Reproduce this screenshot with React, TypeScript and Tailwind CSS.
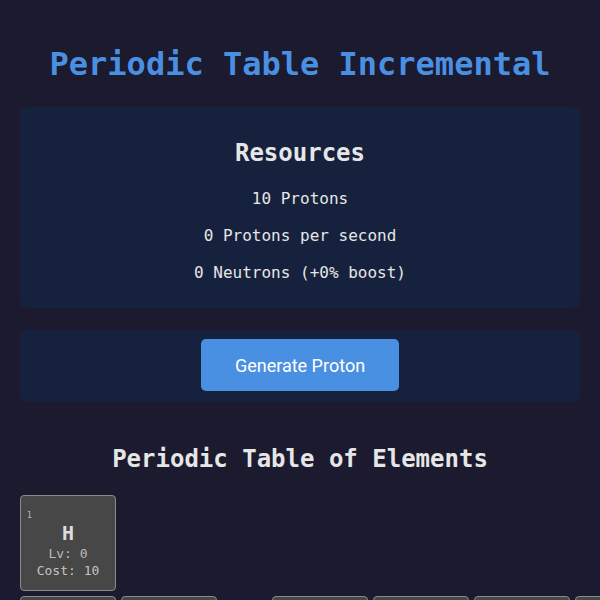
import React from "react";

type El = { n: number; sym: string; col: number; row: number };

const ELEMENTS: El[] = [
  { n: 1, sym: "H", col: 1, row: 1 },
  { n: 2, sym: "He", col: 18, row: 1 },
  { n: 3, sym: "Li", col: 1, row: 2 },
  { n: 4, sym: "Be", col: 2, row: 2 },
  { n: 5, sym: "B", col: 13, row: 2 },
  { n: 6, sym: "C", col: 14, row: 2 },
  { n: 7, sym: "N", col: 15, row: 2 },
  { n: 8, sym: "O", col: 16, row: 2 },
  { n: 9, sym: "F", col: 17, row: 2 },
  { n: 10, sym: "Ne", col: 18, row: 2 },
];

const mono = "font-['DejaVu_Sans_Mono','Liberation_Mono',monospace]";

function Cell({ el }: { el: El }) {
  return (
    <div
      className="relative w-[96px] h-[96px] rounded-[4px] border border-[#8a8a8a] bg-[#474747] flex flex-col items-center justify-center pt-[13px]"
      style={{ gridColumn: el.col, gridRow: el.row }}
    >
      <span className="absolute left-[6px] top-[15px] text-[8px] leading-[10px] text-[#bdbdbd]">{el.n}</span>
      <span className="text-[20px] leading-[24px] font-bold text-[#dcdcdc]">{el.sym}</span>
      <span className="text-[13px] leading-[17px] text-[#bcbcbc]">Lv: 0</span>
      <span className="text-[13px] leading-[17px] text-[#c4c4c4]">Cost: {el.n * 10}</span>
    </div>
  );
}

export default function App() {
  return (
    <div className={`h-screen overflow-hidden bg-[#1b1a2e] text-[#e6e6e6] ${mono}`}>
      <div className="px-5 pt-5">
        <h1 className="mt-6 text-center text-[32px] leading-[40px] font-bold text-[#4a90e2]">
          Periodic Table Incremental
        </h1>

        <div className="mt-[23px] rounded-[6px] bg-[#16213e] p-5 pb-[23px] text-center">
          <h2 className="mt-[10px] text-[24px] leading-[32px] font-bold">Resources</h2>
          <p className="mt-[18px] text-[16px] leading-[24px]">10 Protons</p>
          <p className="mt-[13px] text-[16px] leading-[24px]">0 Protons per second</p>
          <p className="mt-[13px] text-[16px] leading-[24px]">0 Neutrons (+0% boost)</p>
        </div>

        <div className="mt-[22px] rounded-[6px] bg-[#16213e] pt-[9px] pb-[11px] flex justify-center">
          <button className="w-[198px] h-[52px] rounded-[5px] bg-[#4a90e2] text-white text-[18px] font-['Roboto',sans-serif]">
            Generate Proton
          </button>
        </div>

        <h2 className="mt-[41px] text-center text-[24px] leading-[32px] font-bold">
          Periodic Table of Elements
        </h2>

        <div className="mt-[20px] grid grid-cols-[repeat(18,auto)] justify-start gap-[5px] w-max">
          {ELEMENTS.map((el) => (
            <Cell key={el.n} el={el} />
          ))}
        </div>
      </div>
    </div>
  );
}
